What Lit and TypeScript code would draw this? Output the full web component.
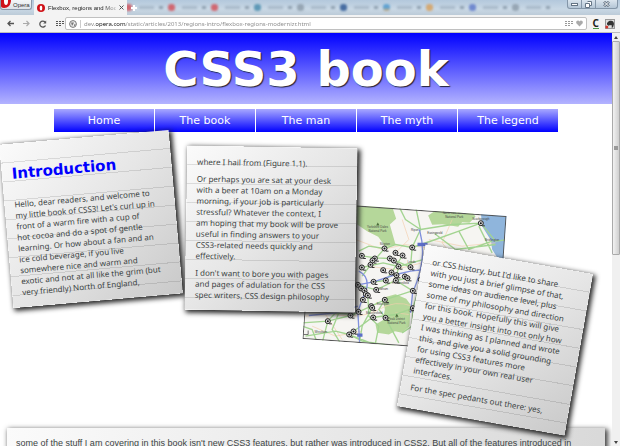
import { LitElement, html, svg, css } from "lit";
import { customElement, property } from "lit/decorators.js";

/* ---------- Browser chrome ---------- */

const backgroundTabs = ["red", "red", "red", "teal", "grey", "navy", "azure", "orange", "violet", "grey"];

@customElement("browser-chrome")
class BrowserChrome extends LitElement {
  static styles = css`
    :host { display: block; flex: none; font-family: "Liberation Sans", sans-serif; font-size: 6px; color: #333; }
    button { font: inherit; color: inherit; padding: 0; margin: 0; border: 0; background: none; display: flex; align-items: center; justify-content: center; }
    svg { display: block; flex: none; }
    .tabs { display: flex; height: 15px; overflow: hidden; background: linear-gradient(#b3c8dc, #c9d8e5 60%, #bccbd8); }
    .menu { width: 32px; height: 10px; background: linear-gradient(#f4f6f8, #dde2e8); border: 1px solid #8d99a8; border-top: 0; border-radius: 0 0 3px 3px; gap: 2px; box-sizing: border-box; justify-content: flex-start; }
    .tab { width: 93px; margin-left: 2px; padding: 0 3px; box-sizing: border-box; background: #f3f3f3; gap: 3px; justify-content: flex-start; }
    .title { flex: 1; min-width: 0; white-space: nowrap; text-align: left; color: #222; -webkit-mask-image: linear-gradient(90deg, #000 80%, #0004); mask-image: linear-gradient(90deg, #000 80%, #0004); }
    .rest { flex: 1; display: flex; min-width: 0; position: relative; overflow: hidden; }
    .plus { position: absolute; left: 4px; top: 5px; z-index: 1; }
    .dim { flex: 0 1 43px; display: flex; align-items: center; gap: 7px; filter: blur(1px); opacity: .75; }
    .dot { flex: none; width: 7px; height: 7px; border-radius: 3px; margin-left: -2px; }
    .smear { width: 15px; height: 3px; background: #91a3b3; opacity: .7; }
    .close { width: 4px; height: 3px; background: #7f90a0; margin-left: -2px; }
    .red { background: #d4434b; } .teal { background: #3d85a8; } .grey { background: #8796a4; } .navy { background: #1d4a8b; }
    .azure { background: linear-gradient(#3f92cc 55%, #e09a45); } .orange { background: #d99b50; } .violet { background: #5470c8; }
    .window { flex: none; display: flex; height: 9px; margin-right: 2px; border: 1px solid #8496a8; border-top: 0; border-radius: 0 0 3px 3px; box-sizing: border-box; background: linear-gradient(#dbe5ee, #b4c6d6); }
    .window button { width: 14px; border-right: 1px solid #8496a8; }
    .window button:last-child { width: 21px; border: 0; }
    .bar { display: flex; align-items: center; height: 18px; padding: 0 5px 0 7px; background: #f3f3f3; border-bottom: 1px solid #bdbdbd; box-sizing: border-box; }
    .tools { display: flex; gap: 9px; width: 58px; }
    .address { flex: 1; display: flex; align-items: center; height: 13px; background: #fff; border: 1px solid #c0c0c0; border-radius: 2px; box-sizing: border-box; padding: 0 3px; gap: 3px; min-width: 0; }
    .split { width: 1px; height: 8px; background: #ccc; }
    input { flex: 1; min-width: 0; border: 0; padding: 0; margin: 0; outline: 0; height: 11px; font: 6px "Noto Sans", sans-serif; color: transparent; background: linear-gradient(90deg, #888 12px, #111 12px 42px, #888 42px); -webkit-background-clip: text; background-clip: text; }
    .extras { display: flex; gap: 6px; margin-left: 6px; align-items: center; }
    .c { font: bold 10px/10px "Noto Sans", sans-serif; color: #222; border-bottom: 1px solid #4b9a4b; }
  `;
  render() {
    return html`
      <div class="tabs">
        <button class="menu">
          <svg width="10" height="10" viewBox="0 0 10 10"><path d="M0 0h10c0 5-3 8-7 8-2 0-3-1-3-2z" fill="#cf1218"/><ellipse cx="5" cy="1" rx="2" ry="4" fill="#fff"/></svg>Opera
        </button>
        <button class="tab">
          <svg width="8" height="8" viewBox="0 0 8 8"><circle cx="4" cy="4" r="4" fill="#cf1218"/><ellipse cx="4" cy="4" rx="1.3" ry="2.6" fill="#fff"/></svg>
          <span class="title">Flexbox, regions and Mode</span>
          <svg width="5" height="5" viewBox="0 0 5 5"><path d="M.5.5l4 4m0-4l-4 4" stroke="#555"/></svg>
        </button>
        <div class="rest">
          <button class="plus" aria-label="New tab"><svg width="6" height="6" viewBox="0 0 6 6"><path d="M3 0v6M0 3h6" stroke="#fff" stroke-width="2"/></svg></button>
          ${backgroundTabs.map(c => html`<div class="dim"><span class="dot ${c}"></span><span class="smear"></span><span class="close"></span></div>`)}
        </div>
        <div class="window">
          <button aria-label="Minimise"><svg width="7" height="5"><rect x=".5" y="1.5" width="6" height="2" fill="#fff" stroke="#657585"/></svg></button>
          <button aria-label="Restore"><svg width="7" height="7"><path d="M2.500.5h4v4h-2M.5 2.500h4v4h-4z" fill="#fff" stroke="#657585"/></svg></button>
          <button aria-label="Close"><svg width="7" height="6"><path d="M1 .5l5 5m0-5l-5 5" stroke="#657585" stroke-width="2.500"/><path d="M1 .5l5 5m0-5l-5 5" stroke="#fff"/></svg></button>
        </div>
      </div>
      <div class="bar">
        <div class="tools">
          <button aria-label="Back"><svg width="7" height="7" viewBox="0 0 7 7"><path d="M7 3.500H1M3.500 1L1 3.500 3.500 6" fill="none" stroke="#555" stroke-width="1.300"/></svg></button>
          <button aria-label="Forward"><svg width="7" height="7" viewBox="0 0 7 7"><path d="M0 3.500h6M3.500 1L6 3.500 3.500 6" fill="none" stroke="#aaa" stroke-width="1.200"/></svg></button>
          <button aria-label="Reload"><svg width="8" height="8" viewBox="0 0 8 8"><path d="M6.500 5.500A3 3 0 1 1 6 2" fill="none" stroke="#555" stroke-width="1.300"/><path d="M7.200.5v3h-3z" fill="#555"/></svg></button>
          <button aria-label="Speed dial"><svg width="8" height="8" viewBox="0 0 8 8"><path d="M0 1h2v1H0zM3 1h2v1H3zM6 1h2v1H6zM0 3h2v1H0zM3 3h2v1H3zM6 3h2v1H6zM0 5h2v1H0zM3 5h2v1H3z" fill="#555"/></svg></button>
        </div>
        <div class="address">
          <svg width="8" height="8" viewBox="0 0 8 8"><circle cx="4" cy="4" r="3.400" fill="#eee" stroke="#777"/><path d="M2 2.500h3L4 4.500 3 6zM5.500 4h1L6 6H5z" fill="#777"/></svg>
          <span class="split"></span>
          <input aria-label="Address" value="dev.opera.com/static/articles/2013/regions-intro/flexbox-regions-modernizr.html">
          <svg width="8" height="6" viewBox="0 0 8 6"><path d="M0 0h2v1H0zM3 0h2v1H3zM6 0h2v1H6zM0 2h2v1H0zM3 2h2v1H3zM6 2h2v1H6zM0 4h2v1H0zM3 4h2v1H3z" fill="#999"/></svg>
          <svg width="7" height="7" viewBox="0 0 7 7"><path d="M3.500 6.500L.3 3.200C-.4 1 2.300-.4 3.500 1.500 4.700-.4 7.400 1 6.700 3.200z" fill="#aaa"/></svg>
        </div>
        <div class="extras">
          <button class="c">C</button>
          <button aria-label="Notes extension"><svg width="10" height="10" viewBox="0 0 10 10"><rect x=".5" y=".5" width="9" height="9" fill="#ddd" stroke="#999"/><path d="M2 4l2-2c3-1 5 0 5 3L8 8.500H6.500L7 6.500 4.500 6 4 7 2 5.500z" fill="#333"/><circle cx="1.800" cy="8" r="1.500" fill="#d3352c"/></svg></button>
        </div>
      </div>`;
  }
}

/* ---------- Map figure ---------- */

const pins = [
  [556, 71], [350, 144], [267, 147], [300, 160], [321, 168], [199, 169], [283, 177], [295, 183], [238, 177], [231, 183], [225, 196],
  [309, 201], [345, 203], [199, 204], [263, 212], [288, 219], [303, 227], [328, 231], [336, 236], [301, 243], [271, 243], [234, 247],
  [376, 240], [352, 274], [242, 271], [187, 256], [197, 267], [207, 273], [211, 284], [217, 288], [202, 301], [268, 301], [227, 320],
  [230, 325], [352, 326], [189, 337], [165, 348], [97, 365], [233, 354], [270, 355], [174, 396], [161, 405],
];

const places: [number, number, string][] = [
  [246, 86, "Yorkshire Dales"], [246, 97, "National Park"], [476, 44, "North York Moors"], [476, 55, "National Park"],
  [556, 62, "Scarborough"], [590, 124, "Bridlington"], [358, 95, "Ripon"], [418, 103, "Easingwold"], [303, 362, "Peak District"],
  [303, 373, "National Park"], [76, 400, "Wrexham"], [348, 191, "Leeds"], [268, 138, "Skipton"], [262, 273, "Oldham"], [315, 255, "Huddersfield"],
  [262, 318, "Stockport"], [236, 344, "Macclesfield"], [364, 337, "Chesterfield"],
];

@customElement("area-map")
class AreaMap extends LitElement {
  static styles = css`
    :host { display: block; }
    svg { display: block; width: 100%; height: 100%; }
    .place { font: 9px "Liberation Sans", sans-serif; fill: #444; text-anchor: middle; }
    .road { fill: none; stroke: #a3d491; stroke-width: 4; }
    .minor { fill: none; stroke: #f3cfae; stroke-width: 2; }
    .motorway { fill: none; stroke: #8191dc; stroke-width: 4; }
    .park { fill: #b5d79a; }
  `;
  render() {
    return html`<svg viewBox="0 0 195 137" role="img" aria-label="Map of northern England">
      <rect width="195" height="137" fill="#f6f5f2"/>
      <g transform="rotate(-4 97.5 68.5) translate(-11.5 -9.5) scale(.33333)">
        <path class="park" d="M180 0L290 22 302 58 283 75 300 135 270 142 248 112 215 95 185 75zM398 48L425 30 532 38 540 52 522 70 500 68 488 82 440 74 410 76zM262 295L300 284 332 298 345 315 342 380 320 400 298 395 280 405 245 400 240 375 262 362 268 330z"/>
        <path d="M555 30L650 40 640 190 604 172 590 150 586 122 560 80z" fill="#8fb5dc"/>
        <path class="minor" d="M120 345Q200 360 250 330T350 320M180 120L260 150 330 135 420 150M215 200L300 210 380 190M50 380L120 410 200 395M470 60L440 130 480 180M300 340L340 345M400 120L500 140 600 130M30 350L90 345 140 420M320 60L340 120 300 160"/>
        <path class="road" d="M20 370L97 365 165 348 227 320 268 301 350 274M97 365L80 430M97 365L120 340 180 345M174 396L230 354 300 345 352 326M161 405L250 440M30 410L120 395 161 405 200 425 300 440M190 155L220 140 267 147 300 135 350 144 420 120 490 95 556 71M199 169L240 175 283 177 345 203M199 204L263 190 309 201 420 170M234 247L271 243 288 219 321 168M187 256L242 271 301 243 336 236M217 288L220 350 250 380 240 430M268 301L250 330 270 355 310 430M360 20L375 90 350 144 345 203M375 90L470 75 556 71 600 125 640 120M418 103L480 150 600 135M490 95L520 150 590 125M200 230L225 196 267 147M230 325L200 380 190 440M320 400L350 380 352 326 370 270M65 430L50 390 20 380M130 340L110 390 140 440M550 80L590 160M375 90L330 60 310 20M309 201L301 243 352 274"/>
        <path class="motorway" d="M190 215Q220 230 214 265L200 300 187 337 193 440M187 256L234 247 301 225 345 215 385 210M372 90Q388 150 376 203T352 274L345 340M40 348L120 340 187 320"/>
        <rect x="366" y="130" width="30" height="10" fill="#5d6fc9"/>
        <rect x="185" y="402" width="16" height="10" fill="#5d6fc9"/>
        <path d="M242 78l5-9 5 9zM299 352l5-9 5 9z" fill="#4a6a3a"/>
        ${places.map(([x, y, name]) => svg`<text class="place" x=${x} y=${y}>${name}</text>`)}
        ${pins.map(([x, y]) => svg`<circle cx=${x} cy=${y} r="7.500" fill="#ddd" stroke="#222" stroke-width="3"/><circle cx=${x} cy=${y} r="3" fill="#111"/><path d="M${x + 4} ${y + 8}h8" stroke="#333" stroke-width="3"/>`)}
        <path d="M24 405h14v-12" fill="none" stroke="#333" stroke-width="2"/>
      </g>
      <rect x=".5" y=".5" width="194" height="136" fill="none" stroke="#555"/>
    </svg>`;
  }
}

/* ---------- Paper note ---------- */

@customElement("paper-note")
class PaperNote extends LitElement {
  @property() heading = "";
  @property({ attribute: false }) paragraphs: string[] = [];
  static styles = css`
    :host {
      display: block; box-sizing: border-box; padding: 10px;
      background: repeating-linear-gradient(transparent 0 18px, #0000001c 18px 19px), linear-gradient(135deg, #fbfbfb, #e6e6e6 50%, #c9c9c9);
      box-shadow: 2px 2px 5px 1px #222; color: #3c4444; font: 8px/11px "Noto Sans", sans-serif;
    }
    h2 { margin: 10px 0 15px; font: bold 15px/20px "DejaVu Sans", sans-serif; color: #00f; }
    p { margin: 0 0 6px; white-space: pre; }
  `;
  render() {
    return html`${this.heading ? html`<h2>${this.heading}</h2>` : ""}${this.paragraphs.map(p => html`<p>${p}</p>`)}`;
  }
}

const intro = [
  "Hello, dear readers, and welcome to\nmy little book of CSS3! Let's curl up in\nfront of a warm fire with a cup of\nhot cocoa and do a spot of gentle\nlearning. Or how about a fan and an\nice cold beverage, if you live\nsomewhere nice and warm and\nexotic and not at all like the grim (but\nvery friendly) North of England,",
];
const second = [
  "where I hail from (Figure 1.1).",
  "Or perhaps you are sat at your desk\nwith a beer at 10am on a Monday\nmorning, if your job is particularly\nstressful? Whatever the context, I\nam hoping that my book will be prove\nuseful in finding answers to your\nCSS3-related needs quickly and\neffectively.",
  "I don't want to bore you with pages\nand pages of adulation for the CSS\nspec writers, CSS design philosophy",
];
const third = [
  "or CSS history, but I'd like to share\nwith you just a brief glimpse of that,\nsome ideas on audience level, plus\nsome of my philosophy and direction\nfor this book. Hopefully this will give\nyou a better insight into not only how\nI was thinking as I planned and wrote\nthis, and give you a solid grounding\nfor using CSS3 features more\neffectively in your own real user\ninterfaces.",
  "For the spec pedants out there: yes,",
];

/* ---------- Page ---------- */

@customElement("app-root")
class AppRoot extends LitElement {
  static styles = css`
    :host { display: flex; flex-direction: column; height: 100vh; overflow: hidden; background: #fff; }
    .view { flex: 1; display: flex; min-height: 0; }
    .page { flex: 1; min-width: 0; overflow: hidden; }
    header { display: flex; align-items: center; justify-content: center; height: 71px; background: linear-gradient(#00f, #b3b3ff); }
    h1 { margin: 0; font: bold 48px/60px "DejaVu Sans", sans-serif; color: #fff; text-shadow: 1px 1px 1px #223; }
    nav { display: flex; gap: 1px; margin: 5px 54px 0; }
    nav a { flex: 1; height: 23px; display: flex; align-items: center; justify-content: center; background: linear-gradient(#a8a8ff, #00f); color: #fff; text-decoration: none; font: 11px "DejaVu Sans", sans-serif; }
    .desk { position: relative; height: 296px; }
    .one, .two, .three, .map { position: absolute; height: 164px; width: 170px; }
    .one { left: 6px; top: 5px; transform: rotate(-5deg); }
    .two { left: 186px; top: 15px; transform: rotate(1deg); }
    .three { left: 410px; top: 126px; transform: rotate(10deg); }
    .map { left: 307px; top: 77px; width: 195px; height: 137px; transform: rotate(4deg); }
    .more { margin: 0 7px; height: 60px; padding: 8px 9px; background: linear-gradient(100deg, #fbfbfb, #d8d8d8); box-shadow: 2px 2px 5px 1px #444; color: #3c4444; font: 9px/14px "Liberation Sans", sans-serif; }
    .more p { margin: 0; white-space: nowrap; }
    .scroll { flex: none; width: 8px; display: flex; flex-direction: column; background: #f0f0f0; }
    .arrow { height: 8px; display: flex; align-items: center; justify-content: center; }
    .arrow svg { display: block; }
    .track { flex: 1; }
    .thumb { height: 54%; box-sizing: border-box; border: 1px solid #aaa; border-radius: 1px; background: linear-gradient(90deg, #f2f2f2, #cfcfcf); display: flex; align-items: center; justify-content: center; }
    .grip { width: 4px; height: 4px; background: #999; }
  `;
  render() {
    return html`
      <browser-chrome></browser-chrome>
      <div class="view">
        <div class="page">
          <header><h1>CSS3 book</h1></header>
          <nav>${["Home", "The book", "The man", "The myth", "The legend"].map(t => html`<a href="#">${t}</a>`)}</nav>
          <main>
            <div class="desk">
              <area-map class="map"></area-map>
              <paper-note class="one" heading="Introduction" .paragraphs=${intro}></paper-note>
              <paper-note class="two" .paragraphs=${second}></paper-note>
              <paper-note class="three" .paragraphs=${third}></paper-note>
            </div>
            <div class="more"><p>some of the stuff I am covering in this book isn't new CSS3 features, but rather was introduced in CSS2. But all of the features introduced in</p></div>
          </main>
        </div>
        <div class="scroll">
          <div class="arrow"><svg width="4" height="3"><path d="M0 3l2-3 2 3z" fill="#444"/></svg></div>
          <div class="track"><div class="thumb"><span class="grip"></span></div></div>
          <div class="arrow"><svg width="4" height="3"><path d="M0 0l2 3 2-3z" fill="#444"/></svg></div>
        </div>
      </div>`;
  }
}
